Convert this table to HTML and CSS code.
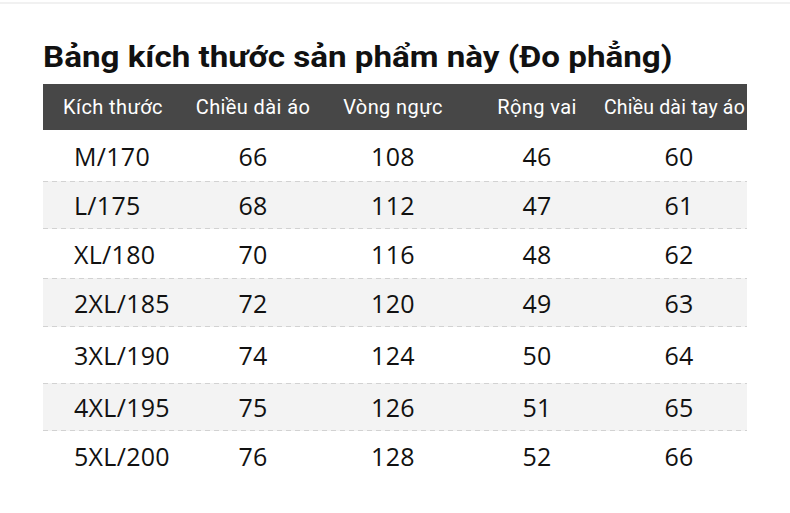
FILE: index.html
```html
<!DOCTYPE html>
<html lang="vi">
<head>
<meta charset="utf-8">
<link rel="stylesheet" href="styles.css">
</head>
<body>
<div class="page">
  <h1 class="title"><span class="title-text">Bảng kích thước sản phẩm này (Đo phẳng)</span></h1>
  <div class="table">
    <div class="row head">
      <div class="c c1">Kích thước</div>
      <div class="c">Chiều dài áo</div>
      <div class="c">Vòng ngực</div>
      <div class="c">Rộng vai</div>
      <div class="c c5">Chiều dài tay áo</div>
    </div>
    <div class="row r1"><div class="c c1">M/170</div><div class="c">66</div><div class="c">108</div><div class="c">46</div><div class="c c5">60</div></div>
    <div class="row alt r2"><div class="c c1">L/175</div><div class="c">68</div><div class="c">112</div><div class="c">47</div><div class="c c5">61</div></div>
    <div class="row r3"><div class="c c1">XL/180</div><div class="c">70</div><div class="c">116</div><div class="c">48</div><div class="c c5">62</div></div>
    <div class="row alt r4"><div class="c c1">2XL/185</div><div class="c">72</div><div class="c">120</div><div class="c">49</div><div class="c c5">63</div></div>
    <div class="row r5"><div class="c c1">3XL/190</div><div class="c">74</div><div class="c">124</div><div class="c">50</div><div class="c c5">64</div></div>
    <div class="row alt r6"><div class="c c1">4XL/195</div><div class="c">75</div><div class="c">126</div><div class="c">51</div><div class="c c5">65</div></div>
    <div class="row r7"><div class="c c1">5XL/200</div><div class="c">76</div><div class="c">128</div><div class="c">52</div><div class="c c5">66</div></div>
  </div>
</div>
</body>
</html>
```
FILE: styles.css
```css
html, body {
  margin: 0;
  padding: 0;
  background: #ffffff;
}
body {
  width: 790px;
  height: 513px;
  overflow: hidden;
}
.page {
  border-top: 2px solid #f1f1f1;
  margin-top: 2px;
  padding: 36px 0 0 43px;
}
.title {
  margin: 0;
  font-family: Roboto, "Liberation Sans", sans-serif;
  font-weight: 700;
  font-size: 30px;
  line-height: 34px;
  color: #111;
  white-space: nowrap;
}
.title-text {
  display: inline-block;
  transform: scaleX(1.105);
  transform-origin: left center;
}
.table {
  margin-top: 10px;
  width: 704px;
}
.row {
  display: grid;
  grid-template-columns: 140px 140px 140px 148px 136px;
  align-items: center;
  font-family: "Open Sans", "Noto Sans", sans-serif;
  font-size: 25px;
  letter-spacing: 0.3px;
  color: #111;
}
.c {
  text-align: center;
  white-space: nowrap;
}
.row .c1 {
  text-align: left;
  padding-left: 31px;
}
.head {
  height: 46px;
  background: #474747;
  color: #ffffff;
  font-family: Roboto, "Liberation Sans", sans-serif;
  font-size: 20px;
  letter-spacing: 0.4px;
}
.head .c1 {
  text-align: center;
  padding-left: 0;
}
.head .c5 {
  text-align: right;
  margin-left: -14px;
  padding-right: 2px;
  font-size: 19.5px;
  letter-spacing: 0.2px;
}
.alt {
  background:
    repeating-linear-gradient(90deg, #d2d2d2 0 5px, transparent 5px 9px) top left / 100% 1px no-repeat,
    repeating-linear-gradient(90deg, #d2d2d2 0 5px, transparent 5px 9px) bottom left / 100% 1px no-repeat,
    #f3f3f3;
}
.r1 { height: 51px; }
.r2 { height: 48px; }
.r3 { height: 49px; }
.r4 { height: 49px; }
.r5 { height: 56px; }
.r6 { height: 48px; }
.r7 { height: 50px; }
```
